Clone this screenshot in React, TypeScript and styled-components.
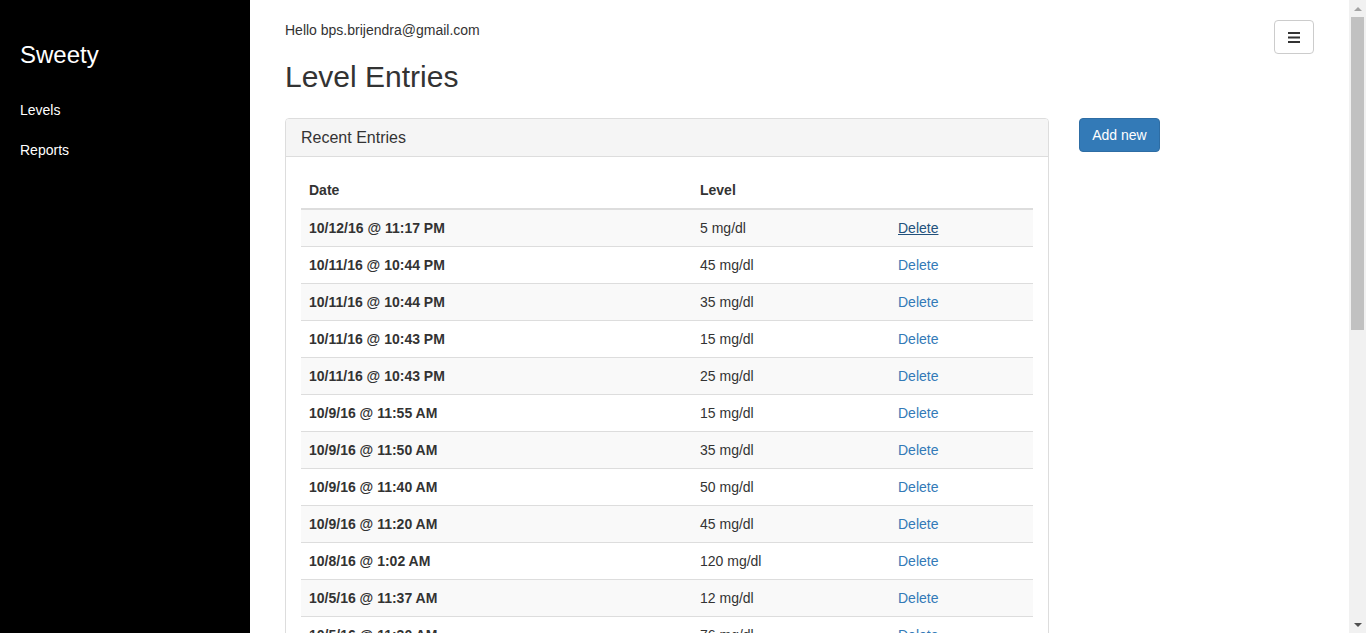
import React from "react";
import styled, { createGlobalStyle } from "styled-components";

const GlobalStyle = createGlobalStyle`
  html, body { margin: 0; padding: 0; }
  body {
    font-family: "Liberation Sans", Arial, Helvetica, sans-serif;
    font-size: 14px;
    line-height: 20px;
    color: #333;
    background: #fff;
  }
  * { box-sizing: border-box; }
`;

const Layout = styled.div`
  display: flex;
  min-height: 100vh;
  padding-right: 17px;
`;

const Sidebar = styled.nav`
  width: 250px;
  flex: 0 0 250px;
  background: #000;
  color: #fff;
  padding: 40px 20px 0;
`;

const Brand = styled.div`
  font-size: 24px;
  line-height: 30px;
  margin-bottom: 30px;
`;

const NavList = styled.ul`
  list-style: none;
  margin: 0;
  padding: 0;
  display: flex;
  flex-direction: column;
  gap: 20px;
`;

const NavLink = styled.a`
  color: #fff;
  text-decoration: none;
  font-size: 14px;
  line-height: 20px;
`;

const Main = styled.main`
  flex: 1;
  padding: 20px 35px 20px;
`;

const TopBar = styled.div`
  display: flex;
  justify-content: space-between;
  align-items: flex-start;
  height: 34px;
`;

const MenuButton = styled.button`
  width: 40px;
  height: 34px;
  border: 1px solid #ccc;
  border-radius: 4px;
  background: #fff;
  display: flex;
  align-items: center;
  justify-content: center;
  padding: 0;
`;

const Title = styled.h1`
  font-size: 30px;
  font-weight: 500;
  line-height: 33px;
  margin: 6px 0 25px;
  color: #333;
`;

const Row = styled.div`
  display: flex;
  align-items: flex-start;
  gap: 30px;
`;

const Panel = styled.section`
  width: 764px;
  flex: 0 0 764px;
  border: 1px solid #ddd;
  border-radius: 4px;
  background: #fff;
`;

const PanelHeading = styled.div`
  background: #f5f5f5;
  border-bottom: 1px solid #ddd;
  border-radius: 3px 3px 0 0;
  padding: 10px 15px;
  font-size: 16px;
  line-height: 17px;
  color: #333;
`;

const PanelBody = styled.div`
  padding: 15px;
`;

const Table = styled.table`
  width: 100%;
  border-collapse: collapse;
  border-spacing: 0;
`;

const Th = styled.th<{ $w?: number }>`
  text-align: left;
  font-weight: bold;
  padding: 8px;
  line-height: 20px;
  border-bottom: 2px solid #ddd;
  width: ${(p) => (p.$w ? `${p.$w}px` : "auto")};
`;

const Tr = styled.tr<{ $striped: boolean }>`
  background: ${(p) => (p.$striped ? "#f9f9f9" : "transparent")};
`;

const Td = styled.td<{ $bold?: boolean }>`
  padding: 8px;
  line-height: 20px;
  border-top: 1px solid #ddd;
  font-weight: ${(p) => (p.$bold ? "bold" : "normal")};
`;

const DeleteLink = styled.a<{ $active?: boolean }>`
  color: ${(p) => (p.$active ? "#23527c" : "#337ab7")};
  text-decoration: ${(p) => (p.$active ? "underline" : "none")};
  cursor: pointer;
`;

const PrimaryButton = styled.button`
  background: #337ab7;
  border: 1px solid #2e6da4;
  border-radius: 4px;
  color: #fff;
  font-family: inherit;
  font-size: 14px;
  line-height: 20px;
  padding: 6px 12px;
  height: 34px;
  min-width: 81px;
`;

const ScrollTrack = styled.div`
  position: fixed;
  top: 0;
  right: 0;
  bottom: 0;
  width: 17px;
  background: #f1f1f1;
  display: flex;
  flex-direction: column;
  align-items: center;
`;

const ScrollArrow = styled.div<{ $down?: boolean }>`
  width: 17px;
  height: 17px;
  flex: 0 0 17px;
  display: flex;
  align-items: center;
  justify-content: center;
  &::before {
    content: "";
    width: 0;
    height: 0;
    border-left: 4px solid transparent;
    border-right: 4px solid transparent;
    ${(p) =>
      p.$down
        ? "border-top: 4px solid #505050;"
        : "border-bottom: 4px solid #a3a3a3;"}
  }
`;

const ScrollSpace = styled.div`
  flex: 1;
  width: 100%;
  display: flex;
  justify-content: center;
`;

const ScrollThumb = styled.div`
  width: 13px;
  height: 313px;
  background: #c1c1c1;
`;

const entries: [string, number][] = [
  ["10/12/16 @ 11:17 PM", 5],
  ["10/11/16 @ 10:44 PM", 45],
  ["10/11/16 @ 10:44 PM", 35],
  ["10/11/16 @ 10:43 PM", 15],
  ["10/11/16 @ 10:43 PM", 25],
  ["10/9/16 @ 11:55 AM", 15],
  ["10/9/16 @ 11:50 AM", 35],
  ["10/9/16 @ 11:40 AM", 50],
  ["10/9/16 @ 11:20 AM", 45],
  ["10/8/16 @ 1:02 AM", 120],
  ["10/5/16 @ 11:37 AM", 12],
  ["10/5/16 @ 11:30 AM", 76],
  ["10/5/16 @ 11:02 AM", 40],
  ["10/4/16 @ 9:15 PM", 60],
  ["10/4/16 @ 8:40 PM", 85],
  ["10/4/16 @ 7:12 AM", 30],
  ["10/3/16 @ 10:05 PM", 55],
  ["10/3/16 @ 6:48 PM", 20],
  ["10/3/16 @ 9:30 AM", 95],
  ["10/2/16 @ 11:11 PM", 70],
  ["10/2/16 @ 4:25 PM", 45],
  ["10/2/16 @ 8:00 AM", 35],
  ["10/1/16 @ 10:20 PM", 65],
  ["10/1/16 @ 3:33 PM", 25],
  ["10/1/16 @ 7:45 AM", 50],
];

const HamburgerIcon = () => (
  <svg width="12" height="11" viewBox="0 0 12 11" aria-hidden="true">
    <rect x="0" y="0" width="12" height="2" fill="#333" />
    <rect x="0" y="4.5" width="12" height="2" fill="#333" />
    <rect x="0" y="9" width="12" height="2" fill="#333" />
  </svg>
);

export default function App() {
  return (
    <>
      <GlobalStyle />
      <Layout>
        <Sidebar>
          <Brand>Sweety</Brand>
          <NavList>
            <li>
              <NavLink href="#">Levels</NavLink>
            </li>
            <li>
              <NavLink href="#">Reports</NavLink>
            </li>
          </NavList>
        </Sidebar>
        <Main>
          <TopBar>
            <span>Hello bps.brijendra@gmail.com</span>
            <MenuButton aria-label="Menu">
              <HamburgerIcon />
            </MenuButton>
          </TopBar>
          <Title>Level Entries</Title>
          <Row>
            <Panel>
              <PanelHeading>Recent Entries</PanelHeading>
              <PanelBody>
                <Table>
                  <thead>
                    <tr>
                      <Th $w={391}>Date</Th>
                      <Th $w={198}>Level</Th>
                      <Th />
                    </tr>
                  </thead>
                  <tbody>
                    {entries.map(([date, level], i) => (
                      <Tr key={i} $striped={i % 2 === 0}>
                        <Td $bold>{date}</Td>
                        <Td>{level} mg/dl</Td>
                        <Td>
                          <DeleteLink $active={i === 0}>Delete</DeleteLink>
                        </Td>
                      </Tr>
                    ))}
                  </tbody>
                </Table>
              </PanelBody>
            </Panel>
            <PrimaryButton>Add new</PrimaryButton>
          </Row>
        </Main>
      </Layout>
      <ScrollTrack aria-hidden="true">
        <ScrollArrow />
        <ScrollSpace>
          <ScrollThumb />
        </ScrollSpace>
        <ScrollArrow $down />
      </ScrollTrack>
    </>
  );
}
